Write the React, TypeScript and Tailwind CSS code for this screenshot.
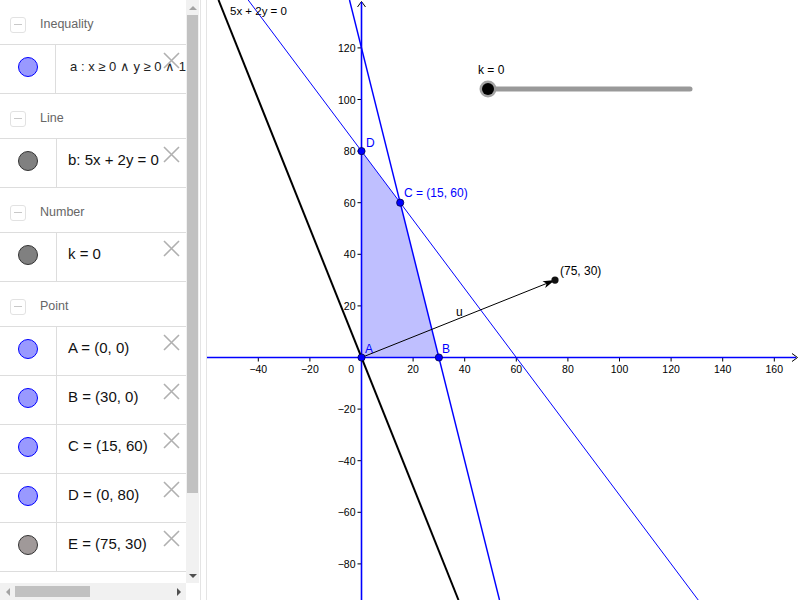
import React from "react";

type Item = { text: string; fill: string; stroke: string; small?: boolean };
type Group = { title: string; items: Item[] };

const BLUE_FILL = "#9999ff";
const BLUE_EDGE = "#0000ff";

const groups: Group[] = [
  {
    title: "Inequality",
    items: [{ text: "a : x ≥ 0 ∧ y ≥ 0 ∧ 1", fill: BLUE_FILL, stroke: BLUE_EDGE, small: true }],
  },
  { title: "Line", items: [{ text: "b: 5x + 2y = 0", fill: "#808080", stroke: "#333333" }] },
  { title: "Number", items: [{ text: "k = 0", fill: "#808080", stroke: "#333333" }] },
  {
    title: "Point",
    items: [
      { text: "A = (0, 0)", fill: BLUE_FILL, stroke: BLUE_EDGE },
      { text: "B = (30, 0)", fill: BLUE_FILL, stroke: BLUE_EDGE },
      { text: "C = (15, 60)", fill: BLUE_FILL, stroke: BLUE_EDGE },
      { text: "D = (0, 80)", fill: BLUE_FILL, stroke: BLUE_EDGE },
      { text: "E = (75, 30)", fill: "#a09999", stroke: "#333333" },
    ],
  },
];

// graph coordinates -> page pixels
const OX = 361.5;
const OY = 357.5;
const S = 2.58;
const px = (u: number) => OX + u * S;
const py = (v: number) => OY - v * S;

const xTicks = [-40, -20, 20, 40, 60, 80, 100, 120, 140, 160];
const yTicks = [120, 100, 80, 60, 40, 20, -20, -40, -60, -80];

const GroupHeader = ({ title }: { title: string }) => (
  <div className="flex h-[45px] items-center border-b border-[#dddddd] pt-[5px]">
    <div className="ml-[10px] flex h-[16px] w-[16px] items-center justify-center rounded-[3px] border border-[#e2e2e2]">
      <div className="h-[1.5px] w-[8px] bg-[#c8c8c8]" />
    </div>
    <span className="ml-[14px] text-[12.5px] text-[#666666]">{title}</span>
  </div>
);

const ItemRow = ({ item }: { item: Item }) => (
  <div className="relative flex h-[49px] border-b border-[#dddddd]">
    <div className="flex w-[57px] items-center justify-center border-r border-[#dddddd] pb-[5px]">
      <div
        className="h-[20px] w-[20px] rounded-full border-[1.5px]"
        style={{ background: item.fill, borderColor: item.stroke }}
      />
    </div>
    <div
      className={
        item.small
          ? "flex items-center whitespace-nowrap pb-[4px] pl-[14px] text-[13px] text-[#222222]"
          : "flex items-center whitespace-nowrap pb-[5px] pl-[11px] text-[15px] text-[#111111]"
      }
    >
      {item.text}
    </div>
    <svg className="absolute left-[163px] top-[7px]" width="17" height="17" viewBox="0 0 17 17">
      <path d="M1 1 L16 16 M16 1 L1 16" stroke="#b0b0b0" strokeWidth="1.6" />
    </svg>
  </div>
);

const AlgebraPanel = () => (
  <div className="flex w-[200px] flex-col" style={{ fontFamily: '"Liberation Sans", Arial, sans-serif' }}>
    <div className="flex min-h-0 flex-1">
      <div className="w-[186px] overflow-hidden">
        {groups.map((g) => (
          <div key={g.title}>
            <GroupHeader title={g.title} />
            {g.items.map((it) => (
              <ItemRow key={it.text} item={it} />
            ))}
          </div>
        ))}
      </div>
      {/* vertical scrollbar */}
      <div className="flex w-[13px] flex-col bg-[#f1f1f1]">
        <div className="flex h-[15px] items-center justify-center">
          <div className="h-0 w-0 border-x-[4px] border-b-[4px] border-x-transparent border-b-[#a3a3a3]" />
        </div>
        <div className="mx-[1px] h-[478px] bg-[#c1c1c1]" />
        <div className="flex-1" />
        <div className="flex h-[15px] items-center justify-center">
          <div className="h-0 w-0 border-x-[4px] border-t-[4px] border-x-transparent border-t-[#505050]" />
        </div>
      </div>
      <div className="w-[1px]" />
    </div>
    {/* horizontal scrollbar */}
    <div className="flex h-[17px]">
      <div className="flex w-[186px] items-center bg-[#f1f1f1]">
        <div className="flex w-[15px] items-center justify-center">
          <div className="h-0 w-0 border-y-[4px] border-r-[4px] border-y-transparent border-r-[#a3a3a3]" />
        </div>
        <div className="h-[11px] w-[75px] bg-[#c1c1c1]" />
        <div className="flex-1" />
        <div className="flex w-[15px] items-center justify-center">
          <div className="h-0 w-0 border-y-[4px] border-l-[4px] border-y-transparent border-l-[#505050]" />
        </div>
      </div>
      <div className="flex-1 bg-white" />
    </div>
  </div>
);

const Graphics = () => {
  const A = [px(0), py(0)];
  const B = [px(30), py(0)];
  const C = [px(15), py(60)];
  const D = [px(0), py(80)];
  const E = [px(75), py(30)];
  // arrow head for vector u
  const dx = E[0] - A[0];
  const dy = E[1] - A[1];
  const len = Math.hypot(dx, dy);
  const ux = dx / len;
  const uy = dy / len;
  const bx = E[0] - ux * 12;
  const by = E[1] - uy * 12;
  const head = `${E[0]},${E[1]} ${bx - uy * 3.6},${by + ux * 3.6} ${E[0] - ux * 9},${E[1] - uy * 9} ${bx + uy * 3.6},${by - ux * 3.6}`;

  return (
    <div className="relative flex-1 bg-white">
      <svg
        width="593"
        height="600"
        viewBox="207 0 593 600"
        style={{ fontFamily: '"Liberation Sans", Arial, sans-serif' }}
      >
        {/* feasible region */}
        <polygon points={`${A} ${B} ${C} ${D}`} fill="#bfbfff" />
        {/* ticks */}
        {xTicks.map((t) => (
          <line key={`xt${t}`} x1={px(t)} y1={OY} x2={px(t)} y2={OY + 4} stroke="#000" strokeWidth="1" />
        ))}
        {yTicks.map((t) => (
          <line key={`yt${t}`} x1={OX - 4} y1={py(t)} x2={OX} y2={py(t)} stroke="#000" strokeWidth="1" />
        ))}
        {/* axis arrows */}
        <path d="M792 353.5 L797.5 357.5 L792 361.5" fill="none" stroke="#000" strokeWidth="1" />
        <path d="M357.5 7 L361.5 1.5 L365.5 7" fill="none" stroke="#000" strokeWidth="1" />
        {/* axis labels */}
        <g fontSize="10.5" fill="#000">
          {xTicks.map((t) => (
            <text key={`xl${t}`} x={px(t)} y={OY + 15} textAnchor="middle">
              {t < 0 ? `\u2212${-t}` : t}
            </text>
          ))}
          {yTicks.map((t) => (
            <text key={`yl${t}`} x={OX - 6} y={py(t) + 4} textAnchor="end">
              {t < 0 ? `\u2212${-t}` : t}
            </text>
          ))}
          <text x={354} y={OY + 15} textAnchor="end">
            0
          </text>
        </g>
        {/* inequality boundaries on the axes */}
        <line x1={207} y1={OY} x2={796} y2={OY} stroke="#0000ff" strokeWidth="1.6" />
        <line x1={OX} y1={2} x2={OX} y2={600} stroke="#0000ff" strokeWidth="1.6" />
        {/* lines through D, C and C, B */}
        <line x1={248.2} y1={0} x2={698.2} y2={600} stroke="#0000ff" strokeWidth="1" />
        <line x1={349.5} y1={0} x2={499.5} y2={600} stroke="#0000ff" strokeWidth="1.4" />
        {/* b: 5x + 2y = 0 */}
        <line x1={218.5} y1={0} x2={458.5} y2={600} stroke="#000" strokeWidth="2" />
        {/* vector u */}
        <line x1={A[0]} y1={A[1]} x2={E[0] - ux * 8} y2={E[1] - uy * 8} stroke="#000" strokeWidth="1" />
        <polygon points={head} fill="#000" />
        {/* points */}
        {[A, B, C, D].map((p, i) => (
          <circle key={i} cx={p[0]} cy={p[1]} r="3.6" fill="#0000ff" stroke="#000044" strokeWidth="0.8" />
        ))}
        <circle cx={E[0]} cy={E[1]} r="3.6" fill="#111" />
        {/* labels */}
        <g fontSize="12" fill="#0000ff">
          <text x={366} y={147}>D</text>
          <text x={404} y={197}>C = (15, 60)</text>
          <text x={365} y={353}>A</text>
          <text x={442} y={353}>B</text>
        </g>
        <g fontSize="12" fill="#000">
          <text x={560} y={275}>(75, 30)</text>
          <text x={456} y={316}>u</text>
          <text x={230} y={15} fontSize="11.5">
            5x + 2y = 0
          </text>
          <text x={478} y={74}>k = 0</text>
        </g>
        {/* slider k */}
        <line x1={488} y1={89} x2={690} y2={89} stroke="#999999" strokeWidth="5" strokeLinecap="round" />
        <circle cx={488} cy={89} r="8.5" fill="#999999" opacity="0.9" />
        <circle cx={488} cy={89} r="6" fill="#000" />
      </svg>
    </div>
  );
}

export default function App() {
  return (
    <div className="flex h-[600px] w-[800px] overflow-hidden bg-white">
      <AlgebraPanel />
      <div className="w-[7px] border-x border-[#e4e4e4]" />
      <Graphics />
    </div>
  );
}
